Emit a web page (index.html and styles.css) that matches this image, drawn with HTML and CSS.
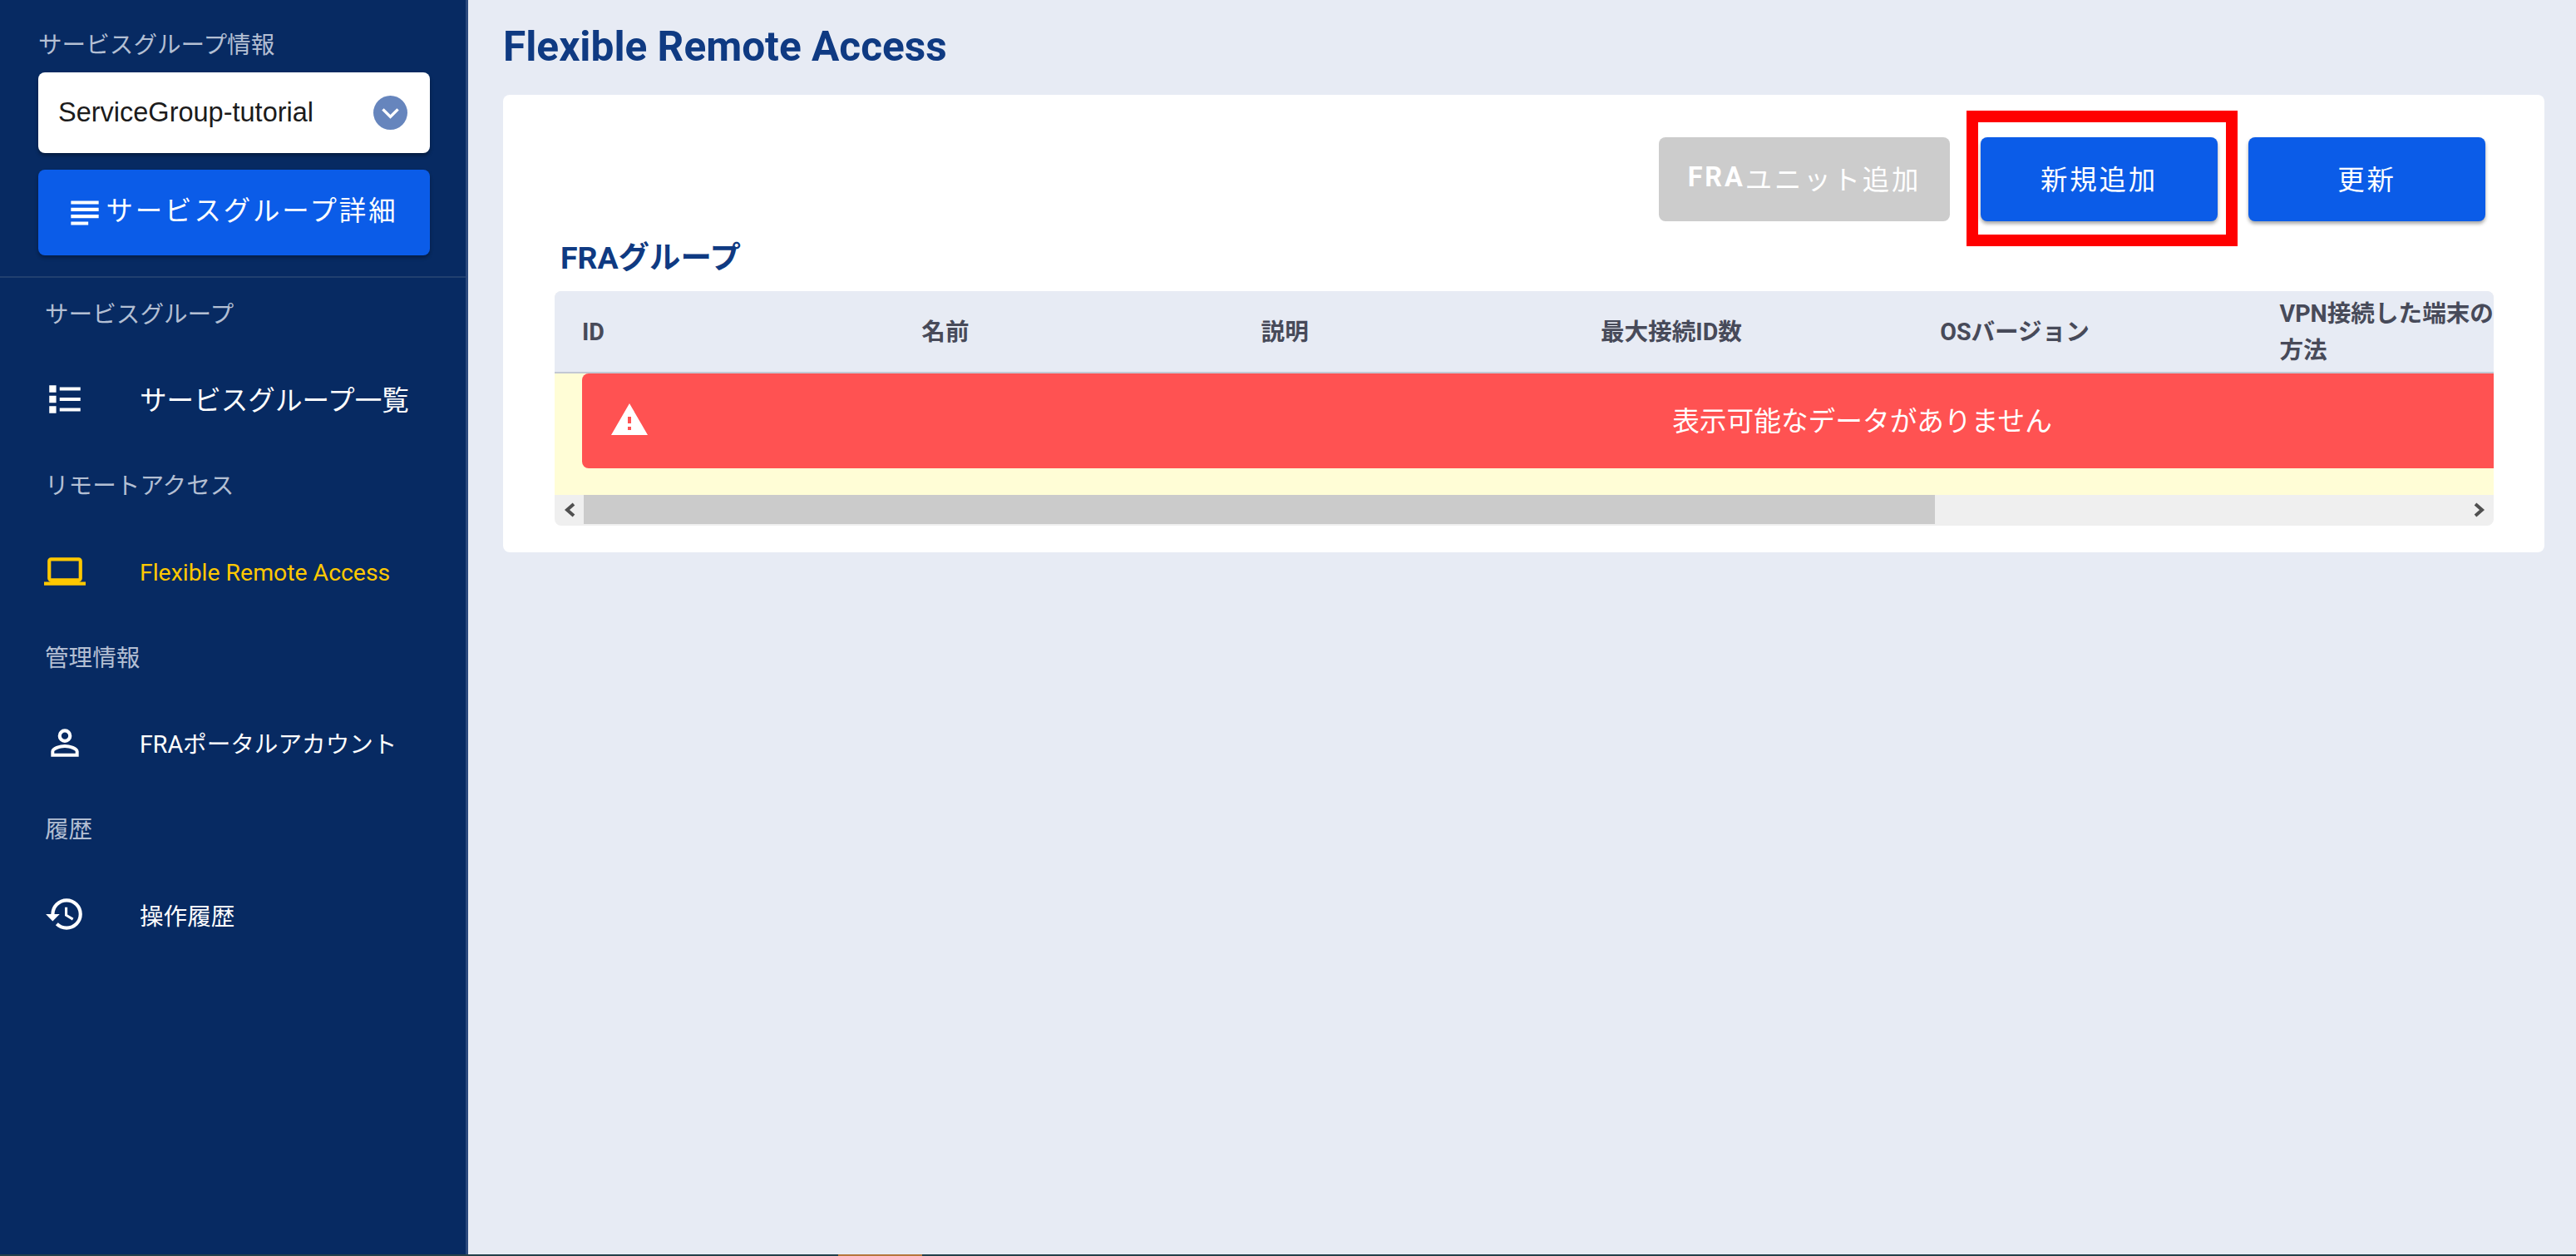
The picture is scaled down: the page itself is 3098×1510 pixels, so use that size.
FILE: index.html
```html
<!DOCTYPE html>
<html lang="ja">
<head>
<meta charset="utf-8">
<title>Flexible Remote Access</title>
<link rel="stylesheet" href="styles.css">
</head>
<body>
<div class="app">
  <aside class="sidebar">
    <div class="group-info">
      <div class="group-label">サービスグループ情報</div>
      <div class="select">
        <span class="select-text">ServiceGroup-tutorial</span>
        <span class="select-chevron"><svg viewBox="0 0 24 24" width="42" height="42"><path fill="#fff" d="M7.41,8.58L12,13.17L16.59,8.58L18,10L12,16L6,10L7.41,8.58Z"/></svg></span>
      </div>
      <button class="btn btn-detail"><svg class="btn-icon" viewBox="0 0 24 24" width="50" height="50"><path fill="#fff" d="M14 17H4v2h10v-2zm6-8H4v2h16V9zM4 15h16v-2H4v2zM4 5v2h16V5H4z"/></svg><span>サービスグループ詳細</span></button>
    </div>
    <nav class="nav">
      <div class="nav-label">サービスグループ</div>
      <div class="nav-item">
        <svg class="nav-icon" viewBox="0 0 24 24"><path d="M3,4H7V8H3V4M9,5V7H21V5H9M3,10H7V14H3V10M9,11V13H21V11H9M3,16H7V20H3V16M9,17V19H21V17H9"/></svg>
        <span class="nav-text nav-text-large">サービスグループ一覧</span>
      </div>
      <div class="nav-label">リモートアクセス</div>
      <div class="nav-item nav-item-active">
        <svg class="nav-icon" viewBox="0 0 24 24"><path d="M4,6H20V16H4M20,18A2,2 0 0,0 22,16V6C22,4.89 21.1,4 20,4H4C2.89,4 2,4.89 2,6V16A2,2 0 0,0 4,18H0V20H24V18H20Z"/></svg>
        <span class="nav-text nav-text-latin">Flexible Remote Access</span>
      </div>
      <div class="nav-label">管理情報</div>
      <div class="nav-item">
        <svg class="nav-icon" viewBox="0 0 24 24"><path d="M12,4A4,4 0 0,1 16,8A4,4 0 0,1 12,12A4,4 0 0,1 8,8A4,4 0 0,1 12,4M12,6A2,2 0 0,0 10,8A2,2 0 0,0 12,10A2,2 0 0,0 14,8A2,2 0 0,0 12,6M12,13C14.67,13 20,14.33 20,17V20H4V17C4,14.33 9.33,13 12,13M12,14.9C9.03,14.9 5.9,16.36 5.9,17V18.1H18.1V17C18.1,16.36 14.97,14.9 12,14.9Z"/></svg>
        <span class="nav-text">FRAポータルアカウント</span>
      </div>
      <div class="nav-label">履歴</div>
      <div class="nav-item">
        <svg class="nav-icon" viewBox="0 0 24 24"><path d="M13.5,8H12V13L16.28,15.54L17,14.33L13.5,12.25V8M13,3A9,9 0 0,0 4,12H1L4.96,16.03L9,12H6A7,7 0 0,1 13,5A7,7 0 0,1 20,12A7,7 0 0,1 13,19C11.07,19 9.32,18.21 8.06,16.94L6.64,18.36C8.27,20 10.5,21 13,21A9,9 0 0,0 22,12A9,9 0 0,0 13,3"/></svg>
        <span class="nav-text">操作履歴</span>
      </div>
    </nav>
  </aside>
  <main class="main">
    <h1 class="title">Flexible Remote Access</h1>
    <section class="card">
      <div class="actions">
        <button class="btn btn-action btn-disabled"><span class="btn-latin">FRA</span>ユニット追加</button>
        <div class="highlight-wrap">
          <button class="btn btn-action btn-new">新規追加</button>
          <div class="highlight"></div>
        </div>
        <button class="btn btn-action btn-refresh">更新</button>
      </div>
      <h2 class="subtitle">FRAグループ</h2>
      <div class="table">
        <div class="table-viewport">
          <div class="table-head">
            <div class="th">ID</div>
            <div class="th">名前</div>
            <div class="th">説明</div>
            <div class="th">最大接続ID数</div>
            <div class="th">OSバージョン</div>
            <div class="th th-last">VPN接続した端末の<br>方法</div>
          </div>
          <div class="table-body">
            <div class="alert">
              <svg class="alert-icon" viewBox="0 0 24 24"><path fill="#fff" d="M13 14H11V10H13M13 18H11V16H13M1 21H23L12 2L1 21Z"/></svg>
              <div class="alert-text">表示可能なデータがありません</div>
            </div>
          </div>
        </div>
        <div class="scrollbar">
          <span class="scroll-arrow"><svg viewBox="0 0 16 18" width="16" height="18"><path d="M13 2L5 9L13 16" fill="none" stroke="#505050" stroke-width="4"/></svg></span>
          <div class="scroll-thumb"></div>
          <div class="scroll-rest"></div>
          <span class="scroll-arrow"><svg viewBox="0 0 16 18" width="16" height="18"><path d="M3 2L11 9L3 16" fill="none" stroke="#505050" stroke-width="4"/></svg></span>
        </div>
      </div>
    </section>
  </main>
</div>
<div class="taskbar-strip"><div class="strip-accent"></div></div>
</body>
</html>
```
FILE: styles.css
```css
* { box-sizing: border-box; }
html, body { margin: 0; height: 100%; }
body {
  display: flex;
  flex-direction: column;
  font-family: Roboto, "Noto Sans CJK JP", sans-serif;
  background: #e7ebf4;
  overflow: hidden;
}
.app { flex: 1; display: flex; min-height: 0; }

.sidebar {
  width: 563px;
  flex: none;
  background: #072a62;
  border-right: 3px solid #2c4a7d;
  color: #fff;
}
.group-info {
  padding: 36px 43px 25px 46px;
  border-bottom: 2px solid #21406f;
}
.group-label {
  font-size: 28.6px;
  line-height: 36px;
  color: #b3bfd3;
}
.select {
  margin-top: 15px;
  height: 97px;
  background: #fff;
  border-radius: 8px;
  display: flex;
  align-items: center;
  justify-content: space-between;
  padding: 0 27px 0 24px;
  box-shadow: 0 3px 4px rgba(0,0,0,.35);
}
.select-text {
  font-family: "Liberation Sans", Arial, sans-serif;
  font-size: 32.5px;
  color: #1b1b1b;
}
.select-chevron {
  width: 41px;
  height: 41px;
  border-radius: 50%;
  background: #6685bd;
  display: flex;
  align-items: center;
  justify-content: center;
  flex: none;
}
.btn {
  border: 0;
  border-radius: 8px;
  color: #fff;
  font-family: Roboto, "Noto Sans CJK JP", sans-serif;
  font-size: 32.4px;
  letter-spacing: .0892857em;
  background: #0b5ce8;
  padding: 0;
  display: flex;
  align-items: center;
  justify-content: center;
}
.btn-detail {
  margin-top: 20px;
  width: 100%;
  height: 103px;
  padding: 0 8px 11px 0;
  box-shadow: 0 3px 4px rgba(0,0,0,.3);
}
.btn-icon { margin: 12px 1px 0 0; flex: none; }

.nav { padding-top: 13px; }
.nav-label {
  height: 60px;
  line-height: 63px;
  padding-left: 54px;
  font-size: 28.6px;
  color: #b3bfd3;
}
.nav-item {
  height: 146.4px;
  display: flex;
  align-items: center;
  padding-left: 53px;
  color: #fff;
  fill: #fff;
}
.nav-item-active { color: #ffc800; fill: #ffc800; }
.nav-icon { width: 50px; height: 50px; flex: none; }
.nav-text { margin-left: 65px; font-size: 28.6px; white-space: nowrap; }
.nav-text-large { font-size: 32.6px; padding-bottom: 3px; }
.nav-text-latin { font-size: 28.4px; font-weight: 400; padding-top: 3px; }

.main {
  flex: 1;
  min-width: 0;
  padding: 0 38px 0 42px;
}
.title {
  margin: 0;
  height: 114px;
  line-height: 112px;
  font-size: 49.6px;
  font-weight: 700;
  color: #0f3a82;
}
.card {
  background: #fff;
  border-radius: 8px;
  padding: 51px 61px 32px 62px;
}
.actions {
  display: flex;
  justify-content: flex-end;
  gap: 37px;
  padding-right: 10px;
}
.btn-action { height: 101px; padding-bottom: 5px; }
.btn-disabled { width: 350px; background: #cccccc; }
.btn-latin { font-weight: 700; }
.btn-new { width: 285px; box-shadow: 0 3px 4px rgba(0,0,0,.35); }
.btn-refresh { width: 285px; box-shadow: 0 3px 4px rgba(0,0,0,.35); }
.highlight-wrap { position: relative; }
.highlight {
  position: absolute;
  left: -17px;
  right: -24px;
  top: -32px;
  bottom: -30px;
  border: 14px solid #ff0000;
  pointer-events: none;
}
.subtitle {
  margin: 19px 0 0 7px;
  height: 65px;
  line-height: 50px;
  font-size: 37.4px;
  font-weight: 700;
  color: #0f3a82;
}
.table {
  border-radius: 8px;
  overflow: hidden;
  background: #efefef;
}
.table-viewport { overflow: hidden; }
.table-head {
  display: flex;
  height: 99px;
  width: 3300px;
  align-items: center;
  background: #e7ebf4;
  border-bottom: 2px solid #c3c8d3;
}
.th {
  width: 408.3px;
  flex: none;
  padding-left: 33px;
  font-size: 28.6px;
  font-weight: 700;
  line-height: 44px;
  color: #474a59;
}
.table-body {
  height: 146px;
  width: 3900px;
  background: #fffdd6;
  padding-left: 33px;
}
.alert {
  width: 2983px;
  height: 114px;
  background: #ff5252;
  border-radius: 8px;
  display: flex;
  align-items: center;
  padding-left: 33px;
  padding-bottom: 2px;
  color: #fff;
  font-size: 32.7px;
}
.alert-icon { width: 48px; height: 48px; flex: none; }
.alert-text { flex: 1; text-align: center; padding: 0 0 3px 15px; }
.scrollbar {
  display: flex;
  height: 37px;
  padding-bottom: 2px;
  align-items: stretch;
}
.scroll-arrow {
  width: 35px;
  flex: none;
  display: flex;
  align-items: center;
  justify-content: center;
}
.scroll-thumb { width: 1625px; background: #cbcbcb; flex: none; }
.scroll-rest { flex: 1; }

.taskbar-strip {
  height: 2px;
  flex: none;
  background: #24404a;
  position: relative;
}
.strip-accent {
  position: absolute;
  left: 1008px;
  top: 0;
  width: 101px;
  height: 2px;
  background: #b5763c;
}
```
